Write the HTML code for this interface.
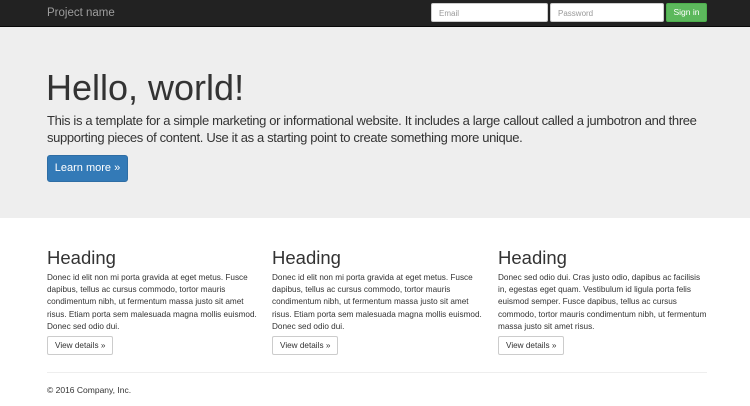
<!DOCTYPE html>
<html><head><meta charset="utf-8"><style>
*{box-sizing:border-box;margin:0;padding:0}
body{width:750px;height:406px;overflow:hidden;background:#fff;font-family:"Liberation Sans",Arial,sans-serif;color:#333}
.nav{position:absolute;left:0;top:0;width:750px;height:27px;background:#222;border-bottom:1px solid #080808}
.brand{position:absolute;left:47px;top:7px;font-size:11.5px;color:#9d9d9d}
.inp{position:absolute;top:3px;height:19px;background:#fff;border:1px solid #ccc;border-radius:2px;font-size:8px;color:#999;padding:5px 7px}
.sign{position:absolute;left:666px;top:3px;width:41px;height:19px;background:#5cb85c;border:1px solid #4cae4c;border-radius:2px;color:#fff;font-size:8.5px;text-align:center;line-height:17px}
.jumbo{position:absolute;left:0;top:27px;width:750px;height:191px;background:#eee}
h1{position:absolute;left:46px;top:41px;font-size:36px;font-weight:400;color:#333;line-height:40px}
.lead{position:absolute;left:47px;top:86px;width:690px;font-size:13px;letter-spacing:-0.35px;line-height:16.5px;color:#333;white-space:nowrap}
.btn{position:absolute;left:47px;top:128px;width:81px;height:27px;background:#337ab7;border:1px solid #2e6da4;border-radius:3px;color:#fff;font-size:11px;text-align:center;line-height:25px}
.col{position:absolute;top:247px;width:212px}
.col h2{font-size:18.5px;font-weight:400;line-height:22px;margin-bottom:3px}
.col p{font-size:8.2px;line-height:12.2px}
.vd{display:inline-block;margin-top:3px;height:19px;border:1px solid #ccc;border-radius:2px;font-size:8.2px;line-height:17px;padding:0 7px}
hr{position:absolute;left:47px;top:372px;width:660px;border:0;border-top:1px solid #eee}
.foot{position:absolute;left:47px;top:385px;font-size:8.5px}
</style></head><body>
<div class="nav"><div class="brand">Project name</div>
<div class="inp" style="left:431px;width:117px">Email</div>
<div class="inp" style="left:550px;width:114px">Password</div>
<div class="sign">Sign in</div></div>
<div class="jumbo">
<h1>Hello, world!</h1>
<div class="lead">This is a template for a simple marketing or informational website. It includes a large callout called a jumbotron and three<br>supporting pieces of content. Use it as a starting point to create something more unique.</div>
<div class="btn">Learn more »</div>
</div>
<div class="col" style="left:47px"><h2>Heading</h2><p>Donec id elit non mi porta gravida at eget metus. Fusce dapibus, tellus ac cursus commodo, tortor mauris condimentum nibh, ut fermentum massa justo sit amet risus. Etiam porta sem malesuada magna mollis euismod. Donec sed odio dui.</p><span class="vd">View details »</span></div>
<div class="col" style="left:272px"><h2>Heading</h2><p>Donec id elit non mi porta gravida at eget metus. Fusce dapibus, tellus ac cursus commodo, tortor mauris condimentum nibh, ut fermentum massa justo sit amet risus. Etiam porta sem malesuada magna mollis euismod. Donec sed odio dui.</p><span class="vd">View details »</span></div>
<div class="col" style="left:498px"><h2>Heading</h2><p>Donec sed odio dui. Cras justo odio, dapibus ac facilisis in, egestas eget quam. Vestibulum id ligula porta felis euismod semper. Fusce dapibus, tellus ac cursus commodo, tortor mauris condimentum nibh, ut fermentum massa justo sit amet risus.</p><span class="vd">View details »</span></div>
<hr>
<div class="foot">© 2016 Company, Inc.</div>
</body></html>
